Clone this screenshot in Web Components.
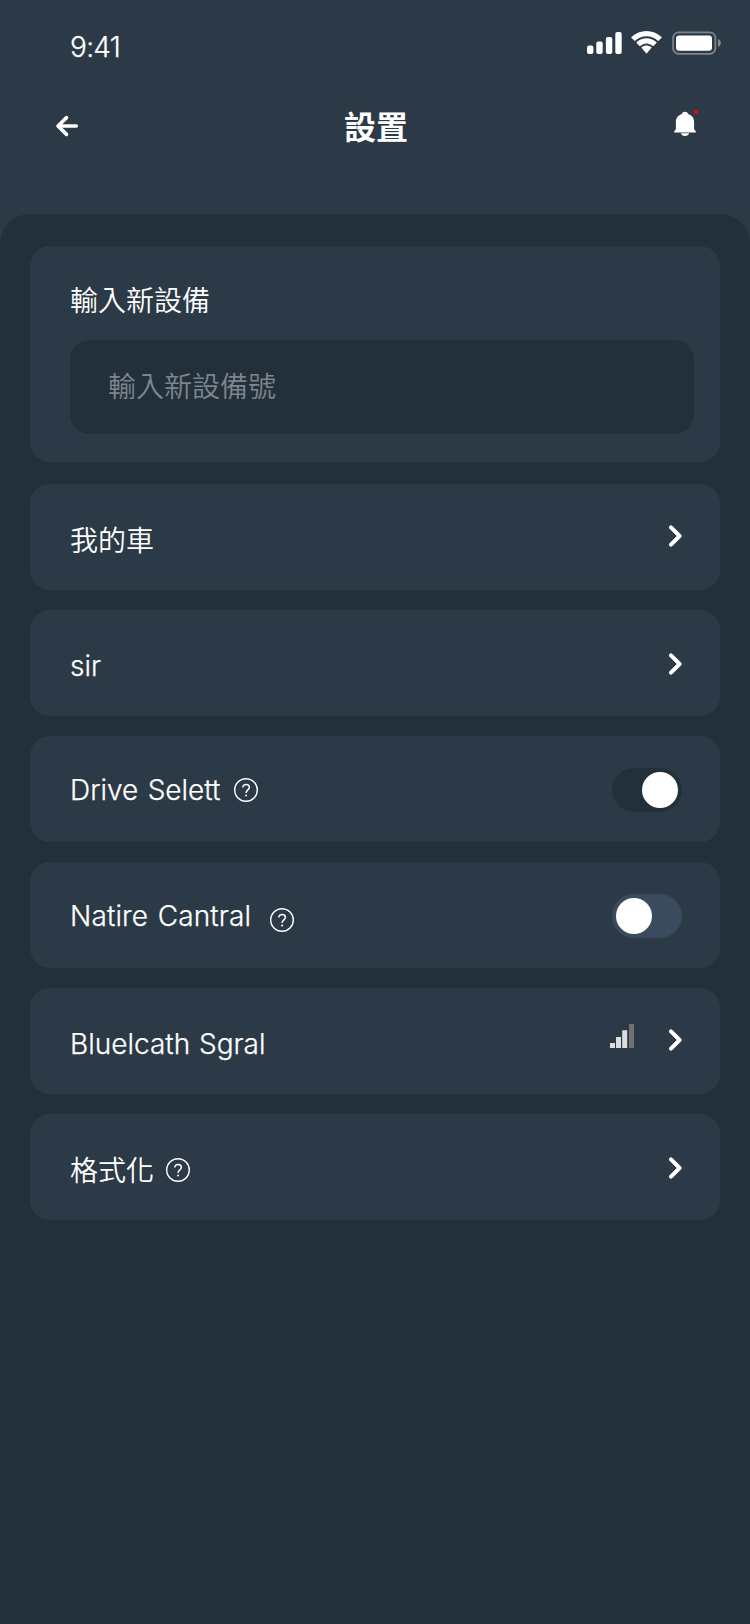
<!DOCTYPE html>
<html lang="zh-Hant">
<head>
<meta charset="utf-8">
<title>設置</title>
<style>
html,body{margin:0;padding:0;background:#2c3a47}
body{width:750px;height:1624px;overflow:hidden;color:#fff;font:350 28px/40px Inter,"Noto Sans CJK TC",sans-serif}
</style>
</head>
<body>
<settings-screen></settings-screen>
<script>
function define(name, html) {
  const t = document.createElement('template');
  t.innerHTML = html;
  customElements.define(name, class extends HTMLElement {
    constructor() {
      super();
      this.attachShadow({ mode: 'open' }).append(t.content.cloneNode(true));
    }
  });
}

define('status-bar', `
<style>
:host{display:flex;box-sizing:border-box;height:86px;padding:27px 28px 0 70px;justify-content:space-between;align-items:flex-start}
.time{letter-spacing:-.7px;-webkit-text-stroke:.25px #fff}
svg{display:block;margin-top:2px}
</style>
<span class="time">9:41</span>
<svg width="136" height="30" viewBox="586 29 136 30" fill="#fff">
<rect x="587" y="45.5" width="6.4" height="8.6" rx="2"/><rect x="596.3" y="41.5" width="6.4" height="12.6" rx="2"/><rect x="605.9" y="37" width="6.4" height="17.1" rx="2"/><rect x="615.3" y="32" width="6.4" height="22.1" rx="2"/>
<path d="M646.5 36.3c4.2 0 8.2 1.6 11.3 4.5.2.2.6.2.8 0l3-3c.3-.3.3-.7 0-.9-8.4-8-21.8-8-30.2 0-.3.2-.3.6 0 .9l3 3c.2.2.6.2.8 0 3.100-2.900 7.100-4.500 11.300-4.500z"/>
<path d="M646.500 43.600c2.300 0 4.500.900 6.200 2.400.2.200.6.200.8 0l2.900-3c.3-.3.3-.7 0-.9-5.600-5.200-14.200-5.200-19.800 0-.3.2-.3.600 0 .9l2.900 3c.2.200.6.200.8 0 1.700-1.500 3.900-2.400 6.200-2.400z"/>
<path d="M651.300 48c.3-.3.2-.7 0-.9-2.800-2.300-6.800-2.300-9.600 0-.2.200-.3.600 0 .9l4.400 5.300c.2.300.6.300.8 0z"/>
<rect x="673.100" y="32.400" width="42.300" height="21.400" rx="5.500" fill="none" stroke="#fff" stroke-opacity=".38" stroke-width="1.700"/>
<rect x="676" y="35.500" width="36" height="15.200" rx="3"/>
<path d="M718 39v8c1.700-.7 2.800-2.300 2.800-4s-1.100-3.300-2.800-4z" fill-opacity=".42"/>
</svg>`);

define('nav-bar', `
<style>
:host{display:grid;grid-template-columns:80px 1fr 80px;box-sizing:border-box;height:128px;padding:20px 51px 0 53px;align-items:start}
h1{margin:-1px 0 0;font:700 32px/40px "Noto Sans CJK TC",sans-serif;text-align:center}
svg{display:block}
.bell{justify-self:end}
</style>
<svg width="30" height="40" viewBox="53 106 30 40" fill="none" stroke="#fff" stroke-linecap="round" stroke-linejoin="round"><path d="M76.300 126H60" stroke-width="3.600"/><path d="M66.500 117.600 58 126l8.500 8.400" stroke-width="3.600"/></svg>
<h1><slot></slot></h1>
<svg class="bell" width="30" height="40" viewBox="669 106 30 40" fill="#fff"><path d="M674.200 132.600v-1.400l1.700-2v-7.300c0-4 2.300-6.800 6-7.900.4-1.300 1.500-2.200 3.100-2.200s2.700.9 3.100 2.200c3.700 1.100 6 3.900 6 7.900v7.300l1.700 2v1.400z"/><path d="M680.800 133.300h8.400c-.6 1.700-2.200 2.700-4.200 2.700s-3.600-1-4.200-2.700z"/><circle cx="696" cy="112" r="2.100" fill="#f00"/></svg>`);

define('device-card', `
<style>
:host{display:block;box-sizing:border-box;height:216px;padding:35px 26px 27px 40px;border-radius:20px;background:#2c3a47}
label{display:block;height:59px}
.field{display:flex;align-items:center;box-sizing:border-box;height:94px;padding:0 38px;border-radius:20px;background:#22303c;color:#7f868b}
</style>
<label><slot name="label"></slot></label>
<div class="field"><span><slot></slot></span></div>`);

define('help-icon', `
<style>:host{display:block;width:24px;height:24px}svg{display:block}</style>
<svg width="24" height="24" fill="none" stroke="#fff"><circle cx="12" cy="12" r="11.300" stroke-width="1.400"/><path d="M8.800 9.500c0-1.900 1.300-3.100 3.300-3.100s3.300 1.200 3.300 2.900c0 2.500-3.300 2.700-3.300 5.600" stroke-width="1.500"/><circle cx="12.100" cy="17.600" r="1" fill="#fff" stroke="none"/></svg>`);

define('chevron-icon', `
<style>:host{display:block;width:14px;height:22px}svg{display:block}</style>
<svg width="14" height="22" fill="none" stroke="#fff" stroke-width="4" stroke-linecap="round" stroke-linejoin="round"><path d="m3 2.400 8.600 8.600L3 19.600"/></svg>`);

define('signal-icon', `
<style>:host{display:block;width:24px;height:24px;margin-right:34px}svg{display:block}</style>
<svg width="24" height="24" fill="#ddd"><path d="M0 19h5v5H0zM6 13h5v11H6zM12.200 6.200h5V24h-5z"/><path d="M19 0h5v24h-5z" fill="#707070"/></svg>`);

define('toggle-switch', `
<style>
:host{display:flex;box-sizing:border-box;width:70px;height:44px;padding:4px;border-radius:22px;background:#3a4b5d;align-items:center}
:host([on]){background:#22303c;justify-content:flex-end}
i{width:36px;height:36px;border-radius:50%;background:#fff}
</style><i></i>`);

define('setting-row', `
<style>
:host{display:flex;box-sizing:border-box;height:106px;padding:0 38px 0 40px;border-radius:20px;background:#2c3a47;align-items:center}
.label{width:var(--label-w,auto);white-space:nowrap;letter-spacing:var(--ls,0);word-spacing:var(--ws,0);transform:translateY(var(--label-y,0))}
.help{margin-left:var(--help-gap,14px);transform:translateY(var(--help-y,0))}
.end{display:flex;align-items:center;margin-left:auto;transform:translateY(var(--end-y,0))}
</style>
<span class="label"><slot></slot></span><span class="help"><slot name="help"></slot></span><span class="end"><slot name="end"></slot></span>`);

define('settings-screen', `
<style>
:host{display:flex;flex-direction:column;width:750px;height:1624px}
main{flex:1;display:flex;flex-direction:column;gap:20px;box-sizing:border-box;padding:32px 30px;border-radius:30px 30px 0 0;background:#22303c}
device-card{margin-bottom:2px}
.latin{-webkit-text-stroke:.25px #fff}
</style>
<status-bar></status-bar>
<nav-bar>設置</nav-bar>
<main>
<device-card><span slot="label">輸入新設備</span>輸入新設備號</device-card>
<setting-row style="--label-y:4px;--end-y:-1px">我的車<chevron-icon slot="end"></chevron-icon></setting-row>
<setting-row class="latin" style="--label-y:3px;--end-y:1px">sir<chevron-icon slot="end"></chevron-icon></setting-row>
<setting-row class="latin" style="--label-y:1px;--help-y:1px;--end-y:1px;--label-w:150px;--ws:1.500px">Drive Selett<help-icon slot="help"></help-icon><toggle-switch slot="end" on></toggle-switch></setting-row>
<setting-row class="latin" style="--label-y:1px;--help-y:5px;--end-y:1px;--label-w:181px;--help-gap:19px;--ls:.13px;--ws:1.500px">Natire Cantral<help-icon slot="help"></help-icon><toggle-switch slot="end"></toggle-switch></setting-row>
<setting-row class="latin" style="--label-y:3px;--end-y:-1px;--ws:1px">Bluelcath Sgral<signal-icon slot="end" style="position:relative;top:-4px"></signal-icon><chevron-icon slot="end"></chevron-icon></setting-row>
<setting-row style="--label-y:4px;--help-y:3px;--end-y:1px;--help-gap:12px">格式化<help-icon slot="help"></help-icon><chevron-icon slot="end"></chevron-icon></setting-row>
</main>`);
</script>
</body>
</html>
